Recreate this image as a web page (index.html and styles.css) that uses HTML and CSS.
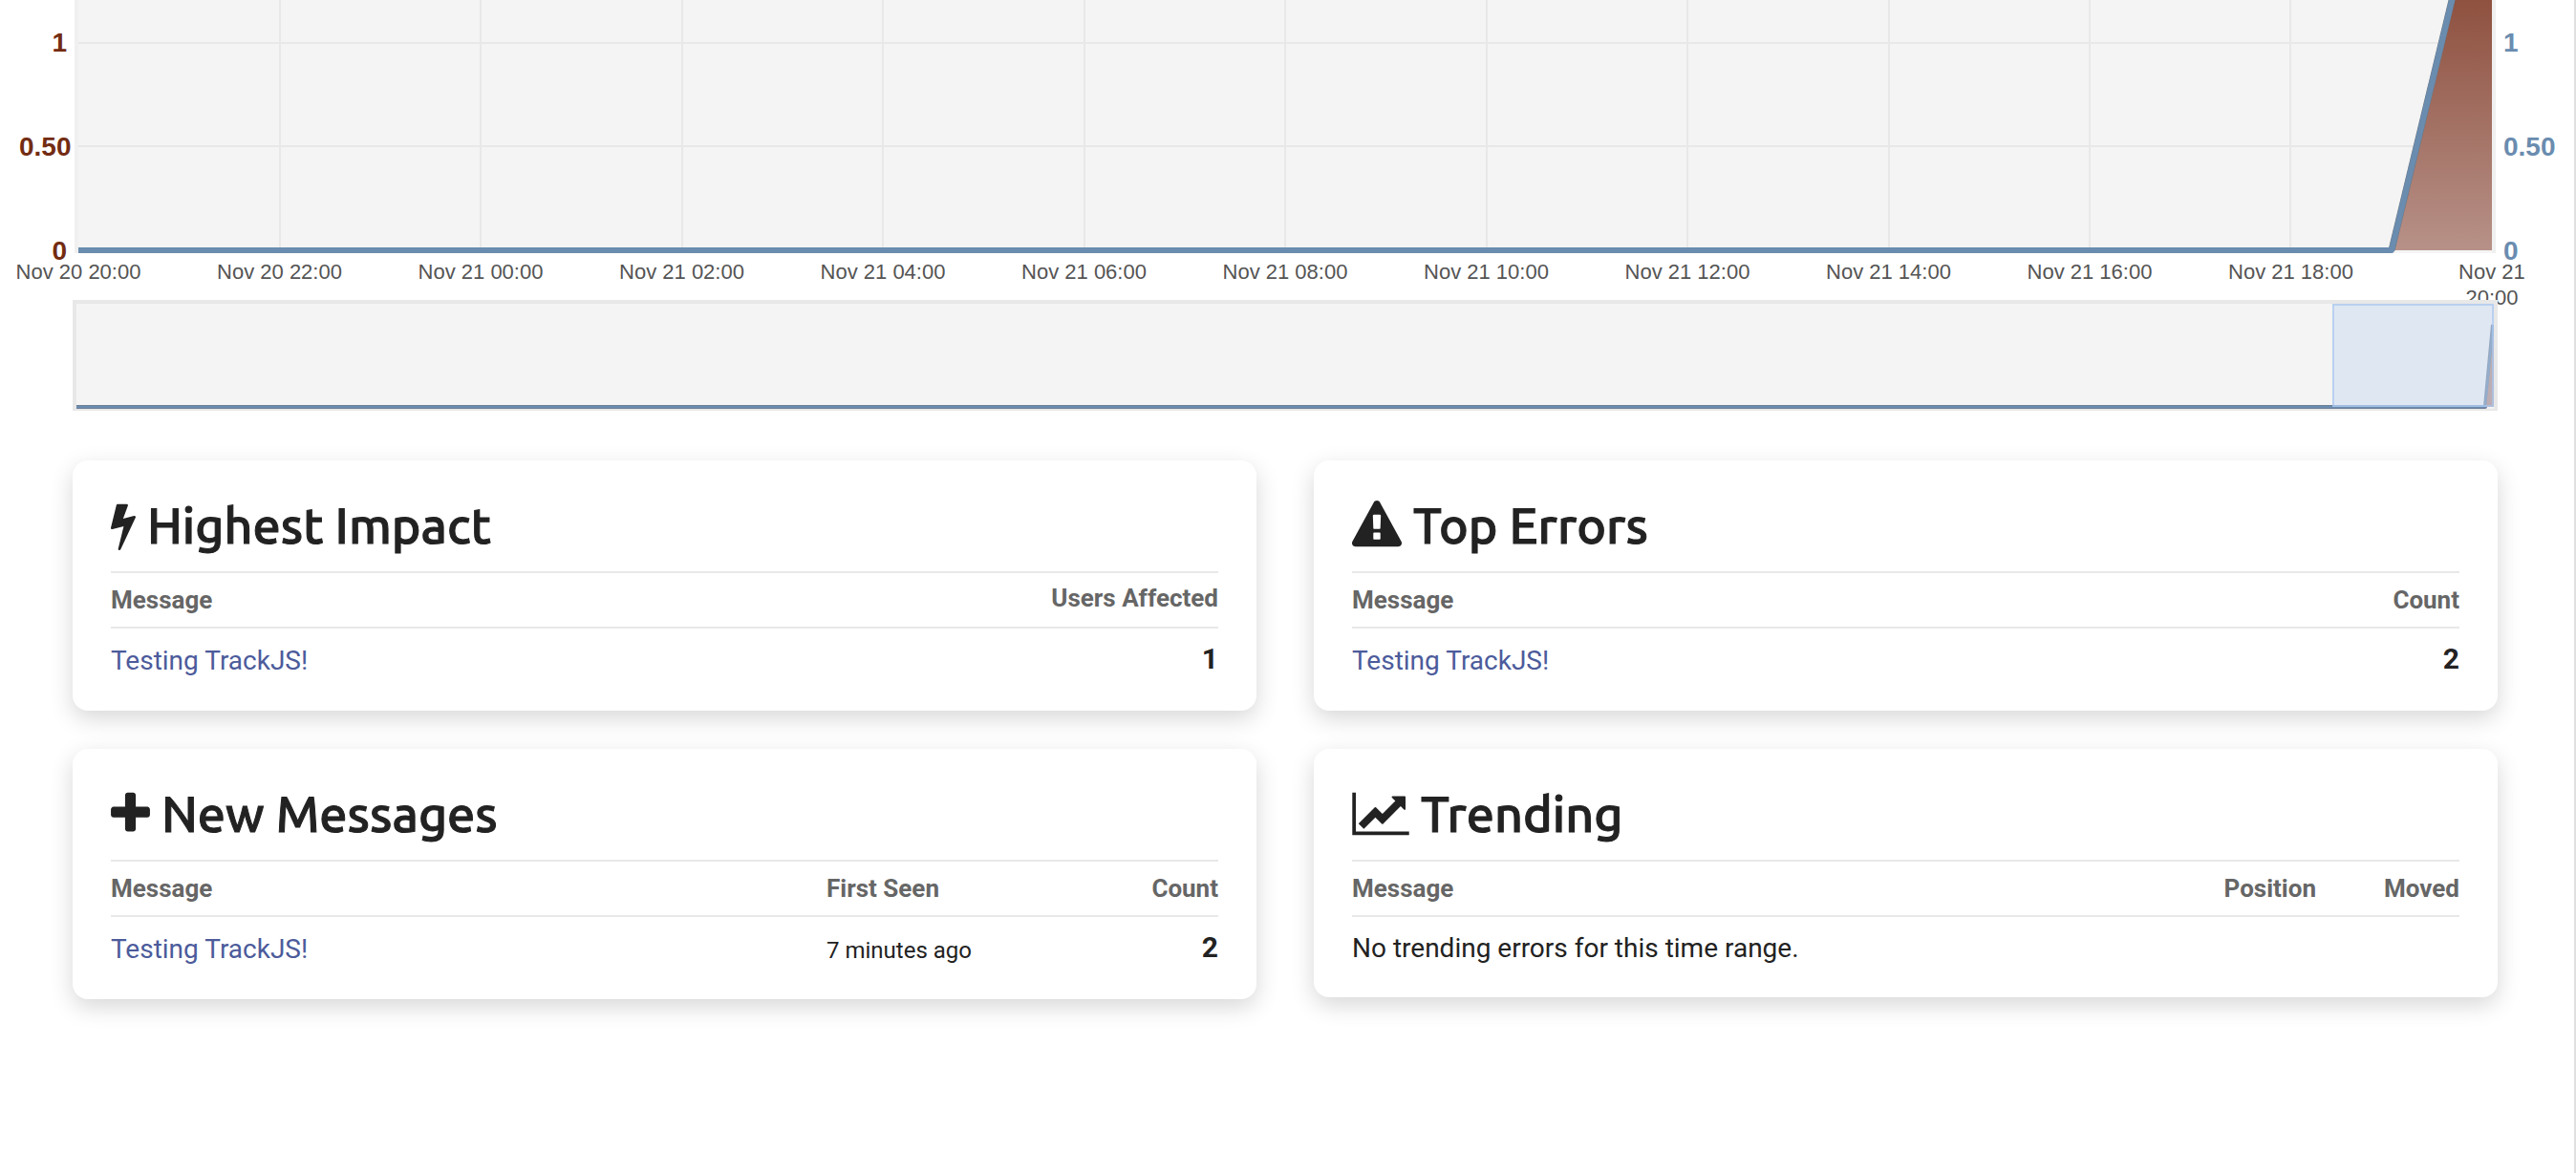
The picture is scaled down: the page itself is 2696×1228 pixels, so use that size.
FILE: index.html
```html
<!DOCTYPE html>
<html lang="en">
<head>
<meta charset="utf-8">
<title>Error Dashboard</title>
<link rel="stylesheet" href="styles.css">
</head>
<body>
<main class="page">
  <section class="chart" aria-label="Errors over time">
    <div class="y-axis y-axis-left">
      <span class="tick">1</span>
      <span class="tick">0.50</span>
      <span class="tick">0</span>
    </div>
    <div class="plot">
      <svg class="plot-canvas" viewBox="0 0 2526 265" preserveAspectRatio="none" aria-hidden="true">
        <defs>
          <linearGradient id="area" x1="0" y1="0" x2="0" y2="262" gradientUnits="userSpaceOnUse">
            <stop offset="0" stop-color="#8f5140"/>
            <stop offset="1" stop-color="#b79188"/>
          </linearGradient>
        </defs>
        <path class="grid-line" d="M0 45H2526M0 153H2526M211 0V262M421 0V262M632 0V262M842 0V262M1053 0V262M1263 0V262M1474 0V262M1684 0V262M1895 0V262M2105 0V262M2315 0V262"/>
        <path fill="url(#area)" d="M2421 262L2526 -174V262Z"/>
        <path class="series-shade" d="M2421 262L2526 -174"/>
        <path class="series" d="M0 262H2421L2526 -174"/>
      </svg>
    </div>
    <div class="y-axis y-axis-right">
      <span class="tick">1</span>
      <span class="tick">0.50</span>
      <span class="tick">0</span>
    </div>
    <div class="x-axis">
      <span>Nov 20 20:00</span>
      <span>Nov 20 22:00</span>
      <span>Nov 21 00:00</span>
      <span>Nov 21 02:00</span>
      <span>Nov 21 04:00</span>
      <span>Nov 21 06:00</span>
      <span>Nov 21 08:00</span>
      <span>Nov 21 10:00</span>
      <span>Nov 21 12:00</span>
      <span>Nov 21 14:00</span>
      <span>Nov 21 16:00</span>
      <span>Nov 21 18:00</span>
      <span>Nov 21<br>20:00</span>
    </div>
  </section>

  <section class="overview" aria-label="Time range">
    <svg class="overview-canvas" viewBox="0 0 2530 110" preserveAspectRatio="none" aria-hidden="true">
      <path class="mini-shade" d="M0 108H2521L2529 22"/>
      <path fill="#b58a80" d="M2522 108L2530 30V108Z"/>
      <path class="mini-series" d="M0 108H2521L2529 22"/>
    </svg>
    <div class="selection"></div>
  </section>

  <div class="cards">
    <section class="card">
      <h2><svg class="icon icon-narrow" viewBox="448 0 896 1792" aria-hidden="true"><path d="M1333 566q18 20 7 44l-540 1157q-13 25-42 25-4 0-14-2-17-5-25.500-19t-4.500-30l197-808-406 101q-4 1-12 1-18 0-31-11-18-15-13-39l201-825q4-14 16-23t28-9h328q19 0 32 12.500t13 29.500q0 8-5 18l-171 463 396-98q8-2 12-2 19 0 34 15z"/></svg>Highest Impact</h2>
      <table>
        <thead><tr><th>Message</th><th class="num raised">Users Affected</th></tr></thead>
        <tbody><tr><td><a href="#">Testing TrackJS!</a></td><td class="num count">1</td></tr></tbody>
      </table>
    </section>

    <section class="card">
      <h2><svg class="icon" viewBox="0 0 1792 1792" aria-hidden="true"><path d="M1024 1375v-190q0-14-9.500-23.500t-22.500-9.500h-192q-13 0-22.500 9.500t-9.500 23.500v190q0 14 9.500 23.500t22.500 9.500h192q13 0 22.500-9.500t9.500-23.500zm-2-374l18-459q0-12-10-19-13-11-24-11h-220q-11 0-24 11-10 7-10 21l17 457q0 10 10 16.500t24 6.500h185q14 0 23.500-6.500t10.500-16.500zm-14-934l768 1408q35 63-2 126-17 29-46.500 46t-63.500 17h-1536q-34 0-63.500-17t-46.500-46q-37-63-2-126l768-1408q17-31 47-49t65-18 65 18 47 49z"/></svg>Top Errors</h2>
      <table>
        <thead><tr><th>Message</th><th class="num">Count</th></tr></thead>
        <tbody><tr><td><a href="#">Testing TrackJS!</a></td><td class="num count">2</td></tr></tbody>
      </table>
    </section>

    <section class="card">
      <h2><svg class="icon icon-plus" viewBox="192 0 1408 1792" aria-hidden="true"><path d="M1600 736v192q0 40-28 68t-68 28h-416v416q0 40-28 68t-68 28h-192q-40 0-68-28t-28-68v-416h-416q-40 0-68-28t-28-68v-192q0-40 28-68t68-28h416v-416q0-40 28-68t68-28h192q40 0 68 28t28 68v416h416q40 0 68 28t28 68z"/></svg>New Messages</h2>
      <table>
        <thead><tr><th>Message</th><th class="seen">First Seen</th><th class="num amount">Count</th></tr></thead>
        <tbody><tr><td><a href="#">Testing TrackJS!</a></td><td class="ago">7 minutes ago</td><td class="num count">2</td></tr></tbody>
      </table>
    </section>

    <section class="card">
      <h2><svg class="icon icon-wide" viewBox="0 0 2048 1792" aria-hidden="true"><path d="M2048 1536v128h-2048v-1536h128v1408h1920zm-128-1248v435q0 21-19.500 29.500t-35.500-7.500l-121-121-633 633q-10 10-23 10t-23-10l-233-233-416 416-192-192 585-585q10-10 23-10t23 10l233 233 464-464-121-121q-16-16-7.500-35.500t29.500-19.500h435q14 0 23 9t9 23z"/></svg>Trending</h2>
      <table>
        <thead><tr><th>Message</th><th class="num position">Position</th><th class="num moved">Moved</th></tr></thead>
        <tbody><tr><td class="empty" colspan="3">No trending errors for this time range.</td></tr></tbody>
      </table>
    </section>
  </div>
</main>
</body>
</html>
```
FILE: styles.css
```css
* {
  box-sizing: border-box;
}

body {
  margin: 0;
  background: #fff;
  color: #222;
  font-family: Roboto, "Liberation Sans", sans-serif;
  font-size: 28px;
}

.page {
  min-height: 100vh;
  border-right: 2px solid #e0e0e0;
  overflow: hidden;
}

/* Main chart */
.chart {
  display: grid;
  grid-template-columns: 78px 1fr 82px;
  font-family: "Liberation Sans", Arial, sans-serif;
}

.plot {
  border: solid #f0f0f0;
  border-width: 0 4px;
  background: #f4f4f4;
}

.plot-canvas,
.overview-canvas {
  display: block;
  width: 100%;
}

.plot-canvas {
  height: 265px;
}

.grid-line {
  fill: none;
  stroke: #e8e8e8;
  stroke-width: 2;
}

.series,
.series-shade,
.mini-series,
.mini-shade {
  fill: none;
  stroke-linejoin: round;
  vector-effect: non-scaling-stroke;
}

.series {
  stroke: #6a8caf;
  stroke-width: 6;
}

.series-shade {
  stroke: #6b7885;
  stroke-width: 7;
}

.y-axis {
  display: flex;
  flex-direction: column;
  gap: 77px;
  height: 265px;
  padding-top: 29px;
  font-size: 28px;
  font-weight: bold;
  line-height: 32px;
}

.tick {
  flex: none;
}

.y-axis-left {
  margin-left: 20px;
  width: 50px;
  color: #732c12;
  text-align: right;
}

.y-axis-right {
  padding-left: 8px;
  color: #6a8caf;
}

/* Each label is centred under its grid line, so the row overhangs the plot by half a step */
.x-axis {
  grid-column: 2;
  display: grid;
  grid-template-columns: repeat(13, 1fr);
  height: 49px;
  margin: 0 calc(4px - (100% - 8px) / 24);
  padding-top: 6px;
  color: #545454;
  font-size: 22px;
  line-height: 27px;
  text-align: center;
}

/* Range selector */
.overview {
  position: relative;
  margin: 0 80px 0 76px;
  border: solid #e8e8e8;
  border-width: 4px 4px 2px;
  background: #f4f4f4;
}

.overview-canvas {
  height: 110px;
}

.mini-series {
  stroke: #6a8caf;
  stroke-width: 2;
}

.mini-shade {
  stroke: #6d7f9a;
  stroke-width: 4;
}

.selection {
  position: absolute;
  top: 0;
  right: 0;
  width: 169px;
  height: 108px;
  border: 2px solid rgba(168, 198, 240, .7);
  background: rgba(198, 215, 240, .45);
}

/* Summary cards */
.cards {
  display: grid;
  grid-template-columns: 1fr 1fr;
  align-items: start;
  gap: 40px 60px;
  margin: 52px 80px 80px 76px;
}

.card {
  padding: 40px 40px 20px;
  border-radius: 16px;
  background: #fff;
  box-shadow: 0 8px 24px rgba(0, 0, 0, .16);
}

h2 {
  display: flex;
  align-items: center;
  gap: 12px;
  height: 56px;
  margin: 0 0 20px;
  font-family: Ubuntu, "Noto Sans", sans-serif;
  font-size: 52px;
  font-weight: 500;
  line-height: 56px;
  -webkit-text-stroke: 1px currentColor;
}

.icon {
  width: 52px;
  height: 52px;
  fill: currentColor;
}

.icon-narrow {
  width: 26px;
}

.icon-plus {
  width: 41px;
}

.icon-wide {
  width: 60px;
}

table {
  width: 100%;
  border-collapse: separate;
  border-spacing: 0;
}

th,
td {
  padding: 0;
  text-align: left;
  vertical-align: baseline;
}

th {
  height: 60px;
  border: solid #e8e8e8;
  border-width: 2px 0;
  color: #666;
  font-size: 26px;
  font-weight: bold;
  line-height: 56px;
}

td {
  padding: 14px 0 12px;
  line-height: 40px;
}

.num {
  text-align: right;
}

.raised {
  line-height: 52px;
  vertical-align: top;
}

.seen {
  width: 280px;
}

.amount {
  width: 130px;
}

.position {
  width: 160px;
}

.moved {
  width: 150px;
}

.count {
  font-size: 30px;
  font-weight: bold;
  line-height: 36px;
  vertical-align: top;
}

.ago {
  font-size: 24px;
  line-height: 36px;
}

.empty {
  line-height: 38px;
}

a {
  color: #4c5b9b;
  text-decoration: none;
}
```
